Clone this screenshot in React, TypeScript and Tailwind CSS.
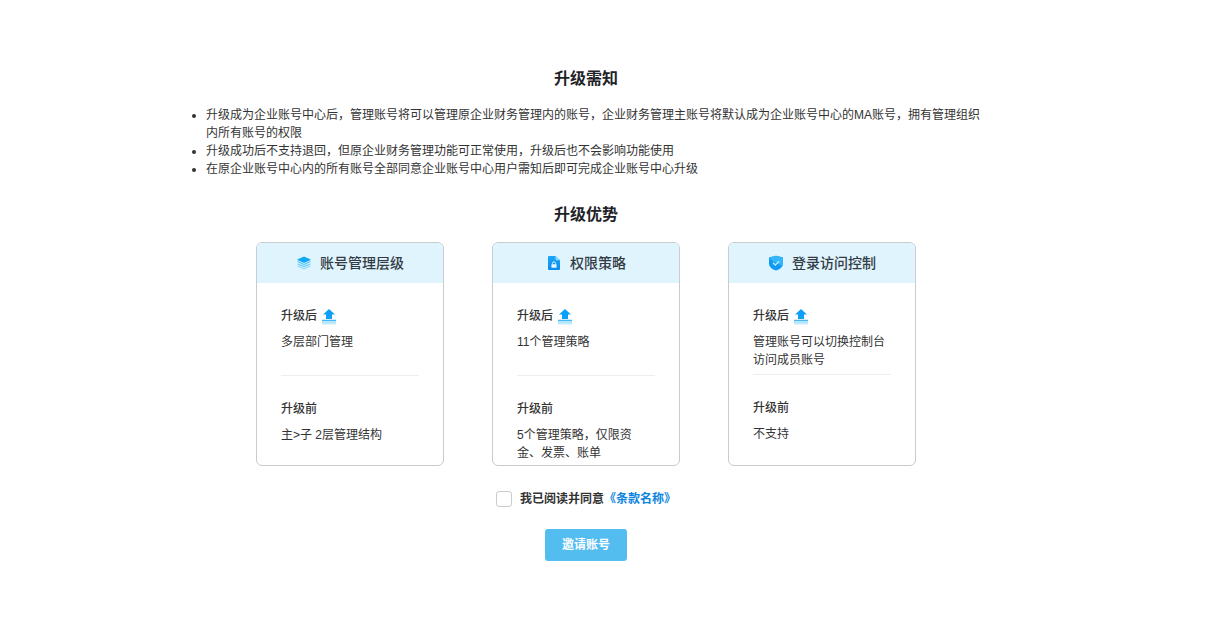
import React from 'react';

const FONT = '"Liberation Sans", "Noto Sans CJK SC", sans-serif';

const LayersIcon = () => (
  <svg width="16" height="16" viewBox="0 0 16 16">
    <path d="M8 1.500 15 4.800 8 8 1 4.800Z" fill="#0ea5f5" />
    <path d="M1 6.800 2.400 6.200 8 8.900 13.600 6.200 15 6.800 8 10Z" fill="#38bdf8" />
    <path d="M1 9 2.400 8.400 8 11.100 13.600 8.400 15 9 8 12.200Z" fill="#5cc8fa" />
    <path d="M1 11.200 2.400 10.600 8 13.300 13.600 10.600 15 11.200 8 14.400Z" fill="#8adcfc" />
  </svg>
);

const FileLockIcon = () => (
  <svg width="16" height="16" viewBox="0 0 16 16">
    <defs>
      <linearGradient id="fileGrad" x1="0" y1="0" x2="0" y2="1">
        <stop offset="0" stopColor="#1aa7f7" />
        <stop offset="1" stopColor="#0a8cf0" />
      </linearGradient>
    </defs>
    <path d="M3 1h6.500L14 5.200V14a1 1 0 0 1-1 1H3a1 1 0 0 1-1-1V2a1 1 0 0 1 1-1Z" fill="url(#fileGrad)" />
    <path d="M9.500 1 14 5.200H10.500a1 1 0 0 1-1-1Z" fill="#8fd8fc" />
    <rect x="5.400" y="9.200" width="5.200" height="3.600" rx=".5" fill="#e6f6fe" />
    <path d="M6.500 9.400V8.300a1.500 1.500 0 0 1 3 0v1.100" fill="none" stroke="#e6f6fe" strokeWidth=".9" />
  </svg>
);

const ShieldIcon = () => (
  <svg width="16" height="16" viewBox="0 0 16 16">
    <path d="M8 .8 15 2.600v5.800c0 3.400-3 5.800-7 7.100-4-1.300-7-3.700-7-7.100V2.600Z" fill="#0f9bf3" />
    <path d="M8 .8 15 2.600v5.800c0 1-.2 1.800-.6 2.600L4.500 6 1.200 3 1 2.600Z" fill="#35b6f8" />
    <path d="M5 7.800 7.300 10 11.100 6.200" fill="none" stroke="#bfeaff" strokeWidth="1.300" />
  </svg>
);

const UpgradeIcon = () => (
  <svg width="14" height="16" viewBox="0 0 14 16">
    <path d="M7 0 13 5.600H10V10H4V5.600H1Z" fill="#0d9ff5" />
    <rect x="0" y="10.800" width="14" height="1" fill="#18a8f7" />
    <rect x="0" y="12.400" width="14" height="1.300" fill="#8fd8fb" />
    <rect x="0" y="14" width="14" height="1.500" fill="#c4ecfd" />
  </svg>
);

type Card = {
  title: string;
  icon: React.ReactNode;
  after: string[];
  before: string[];
  afterH: string;
};

const cards: Card[] = [
  { title: '账号管理层级', icon: <LayersIcon />, after: ['多层部门管理'], before: ['主>子 2层管理结构'], afterH: 'h-[42px]' },
  { title: '权限策略', icon: <FileLockIcon />, after: ['11个管理策略'], before: ['5个管理策略，仅限资金、发票、账单'], afterH: 'h-[42px]' },
  { title: '登录访问控制', icon: <ShieldIcon />, after: ['管理账号可以切换控制台访问成员账号'], before: ['不支持'], afterH: 'h-[41px]' },
];

const notices = [
  '升级成为企业账号中心后，管理账号将可以管理原企业财务管理内的账号，企业财务管理主账号将默认成为企业账号中心的MA账号，拥有管理组织内所有账号的权限',
  '升级成功后不支持退回，但原企业财务管理功能可正常使用，升级后也不会影响功能使用',
  '在原企业账号中心内的所有账号全部同意企业账号中心用户需知后即可完成企业账号中心升级',
];

const AdvantageCard = ({ card }: { card: Card }) => (
  <div className="w-[188px] h-[224px] rounded-md border border-[#c8ccd0] overflow-hidden bg-white">
    <div className="h-10 bg-[#dff4fd] flex items-center justify-center gap-2">
      {card.icon}
      <span className="text-[14px] font-medium text-[#333b45]">{card.title}</span>
    </div>
    <div className="px-6 pt-6">
      <div className="flex items-center gap-[5px] h-[18px] font-medium text-[#333]">
        升级后 <span className="mt-[1px] flex"><UpgradeIcon /></span>
      </div>
      <div className={`mt-2 ${card.afterH}`}>
        {card.after.map((t) => <p key={t} className="text-[#333] leading-[18px]">{t}</p>)}
      </div>
      <div className="border-t border-[#eceef0]" />
      <div className="mt-6 h-[18px] font-medium text-[#333]">升级前</div>
      <div className="mt-2">
        {card.before.map((t) => <p key={t} className="text-[#333] leading-[18px] w-[124px]">{t}</p>)}
      </div>
    </div>
  </div>
);

export default function App() {
  return (
    <div className="w-[1210px] h-[618px] bg-white text-[12px] leading-[18px] overflow-hidden" style={{ fontFamily: FONT }}>
      <div className="ml-[190px] w-[792px] pt-[67px]">
        <h2 className="text-center text-[16px] leading-[24px] font-bold text-[#1f2328]">升级需知</h2>
        <ul className="list-disc pl-4 mt-[15px] text-[#333]">
          {notices.map((n) => <li key={n}>{n}</li>)}
        </ul>
        <h2 className="text-center text-[16px] leading-[24px] font-bold text-[#1f2328] mt-[25px]">升级优势</h2>
        <div className="mt-[15px] flex justify-center gap-12">
          {cards.map((c) => <AdvantageCard key={c.title} card={c} />)}
        </div>
        <div className="mt-6 flex items-center justify-center gap-2 font-bold text-[#333]">
          <span className="w-4 h-4 rounded-[3px] border border-[#c8ccd0] bg-white" />
          <span>我已阅读并同意<span className="text-[#0a84e0]">《条款名称》</span></span>
        </div>
        <div className="mt-[21px] flex justify-center">
          <button className="w-[82px] h-8 rounded-[3px] bg-[#54bdf0] text-white font-bold">邀请账号</button>
        </div>
      </div>
    </div>
  );
}
